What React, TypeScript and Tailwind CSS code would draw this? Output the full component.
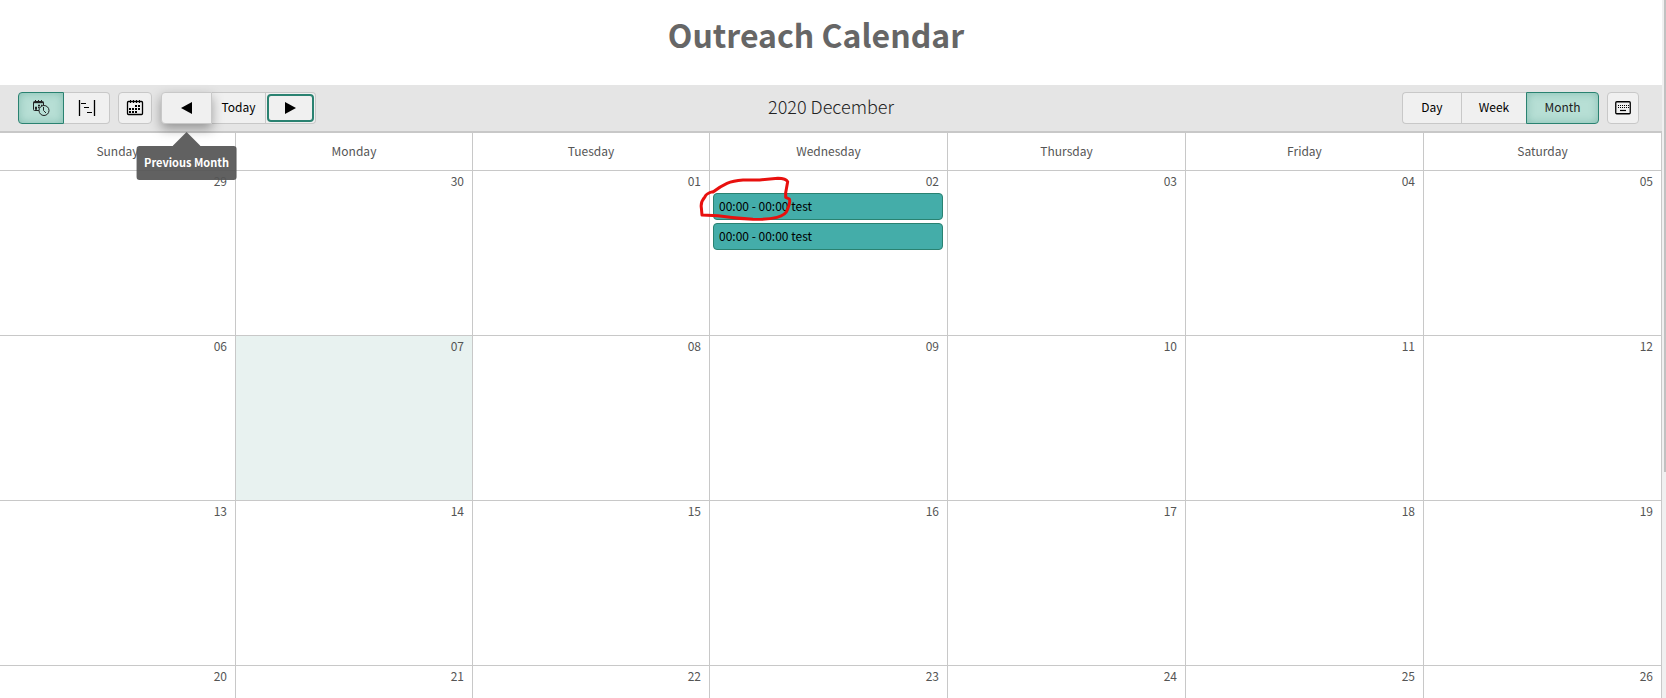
import clsx from "clsx";
import type { ReactNode } from "react";

const DAYS = ["Sunday", "Monday", "Tuesday", "Wednesday", "Thursday", "Friday", "Saturday"];

const WEEKS = [
  ["29", "30", "01", "02", "03", "04", "05"],
  ["06", "07", "08", "09", "10", "11", "12"],
  ["13", "14", "15", "16", "17", "18", "19"],
  ["20", "21", "22", "23", "24", "25", "26"],
];

const TODAY = "07";

const EVENTS: Record<string, string[]> = {
  "02": ["00:00 - 00:00 test", "00:00 - 00:00 test"],
};

type ToolButtonProps = {
  children: ReactNode;
  label?: string;
  active?: boolean;
  className?: string;
};

function ToolButton({ children, label, active, className }: ToolButtonProps) {
  return (
    <button
      type="button"
      aria-label={label}
      aria-pressed={active}
      className={clsx(
        "flex h-8 items-center justify-center border text-xs",
        !label && "pb-0.5",
        active
          ? "border-[#2a8271] bg-[#b7dfd5] text-[#222222] shadow-[inset_0_0_8px_rgba(42,130,113,0.35)]"
          : "border-[#c8c8c8] bg-[#f0f0f0] text-black",
        className
      )}
    >
      {children}
    </button>
  );
}

function ScheduleIcon() {
  return (
    <svg width="18" height="18" viewBox="0 0 18 18" fill="none" stroke="#222">
      <path d="M7.5 11.5H2.5Q1.5 11.5 1.5 10.5V3.5Q1.5 2.5 2.5 2.5H10.5Q11.5 2.5 11.5 3.5V6" />
      <path d="M1.5 3.5H11.5" strokeWidth="1.4" />
      <path d="M3.5 1V4M6.5 1V4M9.5 1V4" />
      <path d="M6 6.5H8M9 6.5H10.5M3 8.5H5M6 8.5H7.5M3 10H5" strokeWidth="1.6" />
      <circle cx="12" cy="11.5" r="5" fill="#b7dfd5" />
      <path d="M11.5 8V11.5L14 14" />
    </svg>
  );
}

function TimelineIcon() {
  return (
    <svg width="18" height="18" viewBox="0 0 18 18" fill="none" stroke="#000">
      <path d="M1.5 1V17M16.5 1V17" strokeWidth="1.3" />
      <path d="M3 4.5H8M6 8.5H11M9 13.5H14" strokeWidth="1.2" />
    </svg>
  );
}

function CalendarIcon() {
  return (
    <svg width="18" height="18" viewBox="0 0 18 18" fill="none" stroke="#000">
      <rect x="1.5" y="2.5" width="15" height="13" rx="1" strokeWidth="1.3" />
      <path d="M4.5 1V4M7.5 1V4M10.5 1V4M13.5 1V4" />
      <path d="M9 7H11M12 7H14M3 10H5M6 10H8M9 10H11M12 10H14M3 13H5M6 13H8M9 13H11" strokeWidth="2" />
    </svg>
  );
}

function KeyboardIcon() {
  return (
    <svg width="16" height="14" viewBox="0 0 16 14" fill="none" stroke="#000">
      <rect x="0.75" y="0.75" width="14.5" height="12" rx="1" strokeWidth="1.3" />
      <path d="M3 4.5H14M3 6.5H14" strokeDasharray="1 1" />
      <path d="M5 9.5H11" strokeWidth="1.2" />
    </svg>
  );
}

function Toolbar() {
  return (
    <div className="grid grid-cols-3 items-center border-b-2 border-[#c8c8c8] bg-[#e5e5e5] pt-[7px] pr-[23px] pb-[7px] pl-[23px]">
      <div className="-ml-[5px] flex">
        <ToolButton label="Schedule" active className="w-[46px] rounded-l">
          <ScheduleIcon />
        </ToolButton>
        <ToolButton label="Timeline" className="w-[46px] rounded-r border-l-0">
          <TimelineIcon />
        </ToolButton>
        <ToolButton label="Calendar" className="ml-2 w-[34px] rounded">
          <CalendarIcon />
        </ToolButton>
        <div className="relative z-10 ml-[9px]">
          <ToolButton label="Previous Month" className="w-[51px] rounded-l shadow-[0_5px_12px_rgba(0,0,0,0.35)]">
            <svg width="11" height="12" viewBox="0 0 11 12">
              <path d="M11 0V12L0 6Z" />
            </svg>
          </ToolButton>
          <div role="tooltip" className="absolute top-10 left-1/2 flex -translate-x-1/2 flex-col items-center">
            <svg width="28" height="14" viewBox="0 0 28 14" fill="#555555" fillOpacity="0.93">
              <path d="M14 0L28 14H0Z" />
            </svg>
            <span className="flex h-[34px] items-center rounded-[3px] bg-[#555555]/93 px-2 pb-0.5 text-[11px] font-bold whitespace-nowrap text-white">
              Previous Month
            </span>
          </div>
        </div>
        <ToolButton className="w-[54px] border-l-0">Today</ToolButton>
        <ToolButton label="Next Month" className="relative w-[50px] rounded-r border-l-0">
          <span className="absolute inset-px rounded border-2 border-[#2a8271]" />
          <svg width="11" height="12" viewBox="0 0 11 12">
            <path d="M0 0V12L11 6Z" />
          </svg>
        </ToolButton>
      </div>
      <h2 className="pb-1 text-center text-lg leading-7 font-light text-[#222222]">2020 December</h2>
      <div className="flex justify-end">
        <ToolButton className="w-[59px] rounded-l border-r-0">Day</ToolButton>
        <ToolButton className="w-[65px] border-r-0">Week</ToolButton>
        <ToolButton active className="w-[73px] rounded-r">Month</ToolButton>
        <ToolButton label="Keyboard shortcuts" className="ml-2 w-8 rounded">
          <KeyboardIcon />
        </ToolButton>
      </div>
    </div>
  );
}

// hand-drawn circle round the time of the first event
function Marker() {
  return (
    <svg
      className="pointer-events-none absolute top-[5px] left-[-12px]"
      width="95"
      height="47"
      viewBox="25 50 285 141"
      fill="none"
      stroke="#e8100e"
      strokeWidth="9"
      strokeLinecap="round"
      strokeLinejoin="round"
    >
      <path d="M70 97Q50 102 46 112Q32 128 35 145L37 167L85 169Q140 177 190 180Q235 181 262 174Q288 167 293 152Q303 130 299 119L288 114V100L294 67Q288 57 265 57L210 62L160 62Q130 64 112 72Q90 82 70 98" />
    </svg>
  );
}

export default function App() {
  return (
    <div className="flex h-screen overflow-hidden bg-white font-['Noto_Sans_CJK_SC',sans-serif] text-[#555555]">
      <main className="min-w-0 flex-1">
        <h1 className="flex h-[85px] items-start justify-center pt-2.5 pr-[30px] text-[32px] leading-12 font-bold text-[#666666]">
          Outreach Calendar
        </h1>
        <Toolbar />
        <table className="w-full table-fixed border-separate border-spacing-0 text-xs">
          <thead>
            <tr>
              {DAYS.map((day) => (
                <th
                  key={day}
                  className="h-[38px] border-r border-b border-[#c8c8c8] p-0 pb-px font-normal first:w-[236px] nth-[2]:w-[237px] nth-[3]:w-[237px]"
                >
                  {day}
                </th>
              ))}
            </tr>
          </thead>
          <tbody>
            {WEEKS.map((week) => (
              <tr key={week[0]}>
                {week.map((date) => (
                  <td
                    key={date}
                    className={clsx(
                      "relative h-[165px] border-r border-b border-[#c8c8c8] p-0 align-top",
                      date === TODAY && "bg-[#e8f2f0]"
                    )}
                  >
                    <div className="h-[22px] pr-2 text-right leading-5">{date}</div>
                    {EVENTS[date] && (
                      <>
                        <ul className="flex flex-col gap-[3px] pr-1 pl-[3px]">
                          {EVENTS[date].map((event, i) => (
                            <li
                              key={i}
                              className="h-[27px] rounded border border-[#2a8271] bg-[#44ada9] px-[5px] leading-6 text-black"
                            >
                              {event}
                            </li>
                          ))}
                        </ul>
                        <Marker />
                      </>
                    )}
                  </td>
                ))}
              </tr>
            ))}
          </tbody>
        </table>
      </main>
      <div className="w-1 bg-[#f0f0f0] pl-0.5">
        <div className="h-[472px] bg-[#c1c1c1]" />
      </div>
    </div>
  );
}
